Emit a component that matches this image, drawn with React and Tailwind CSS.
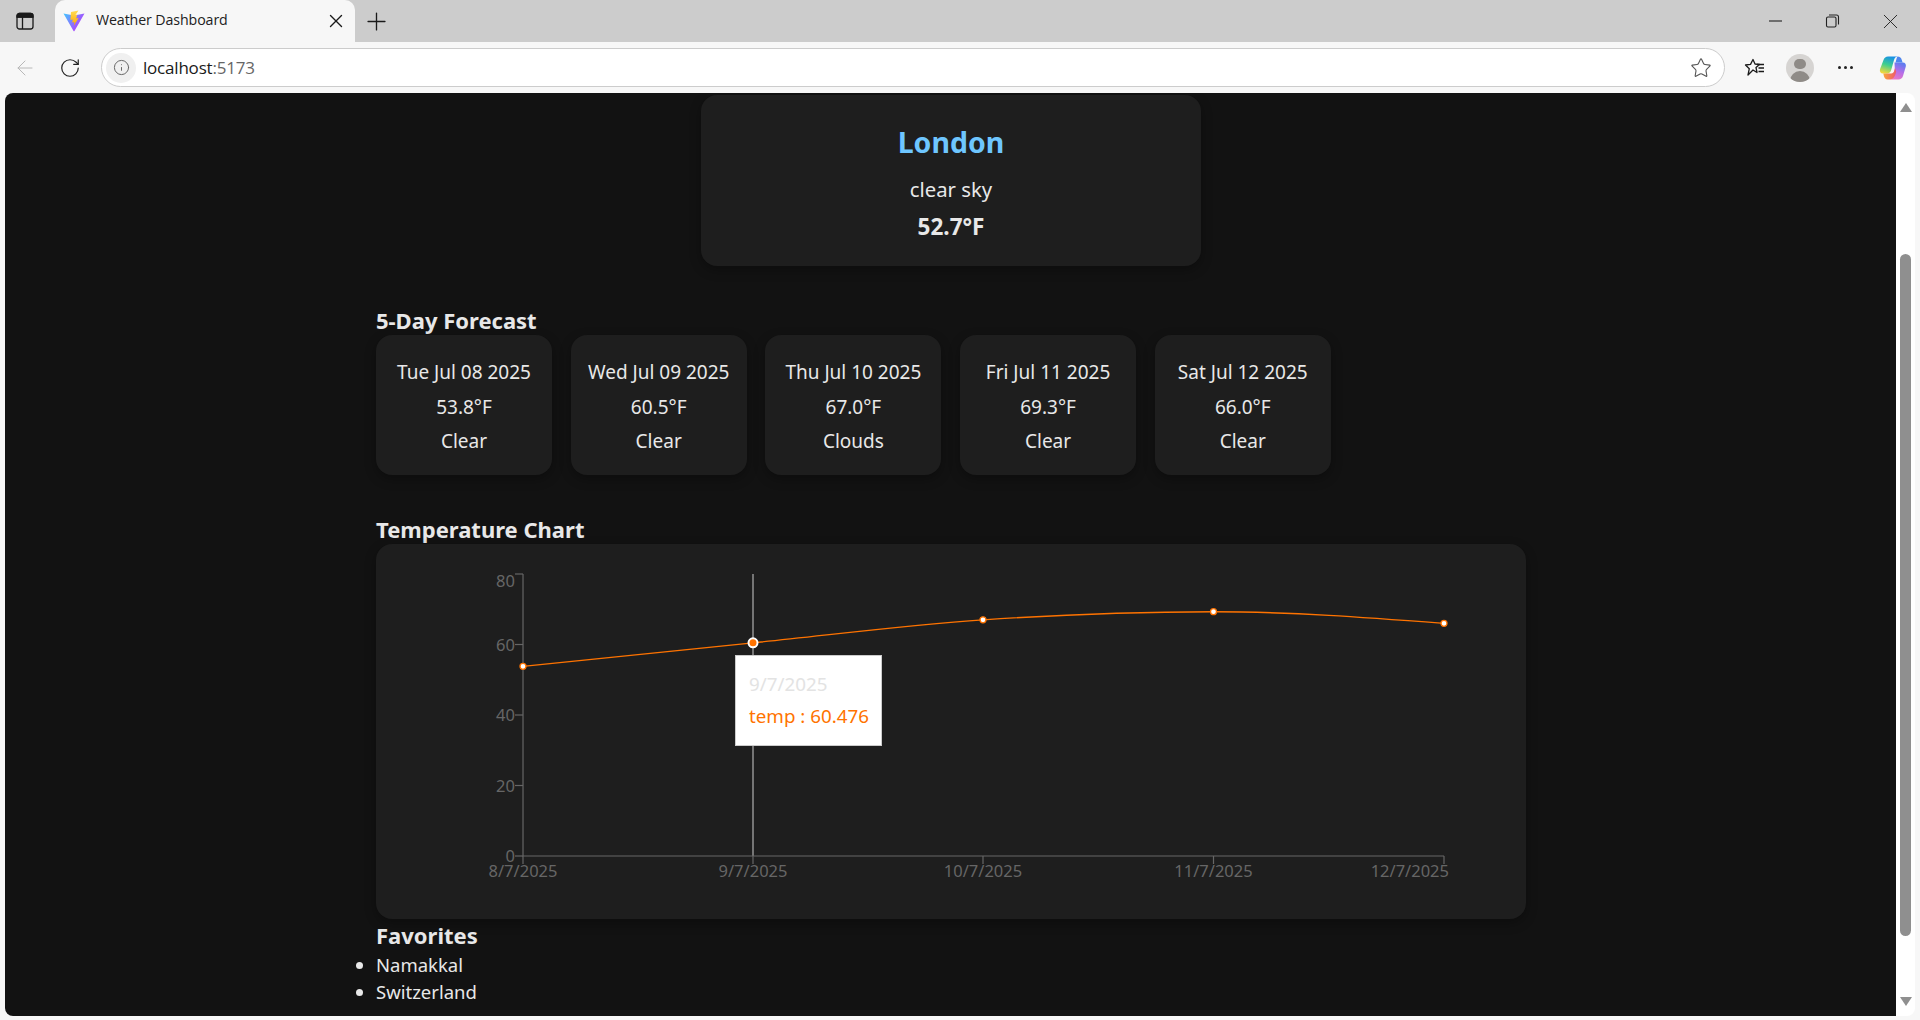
import React from "react";
import { X, Plus, ArrowLeft, RotateCw, Info, Star } from "lucide-react";

const FONT = "font-['Noto_Sans','Open_Sans',sans-serif]";
const data = [
  { l: "8/7/2025", x: 147, v: 53.8, anchor: "middle", tx: 147 },
  { l: "9/7/2025", x: 377, v: 60.476, anchor: "middle", tx: 377 },
  { l: "10/7/2025", x: 607, v: 67.0, anchor: "middle", tx: 607 },
  { l: "11/7/2025", x: 837.500, v: 69.3, anchor: "middle", tx: 837.500 },
  { l: "12/7/2025", x: 1068, v: 66.0, anchor: "end", tx: 1073 },
];
const Y = (v) => 312 - (v / 80) * 282;
function monotonePath(pts) {
  const n = pts.length;
  const d = [], m = [];
  for (let i = 0; i < n - 1; i++) d.push((pts[i + 1][1] - pts[i][1]) / (pts[i + 1][0] - pts[i][0]));
  for (let i = 1; i < n - 1; i++) {
    const h0 = pts[i][0] - pts[i - 1][0], h1 = pts[i + 1][0] - pts[i][0];
    const s0 = d[i - 1], s1 = d[i], p = (s0 * h1 + s1 * h0) / (h0 + h1);
    m[i] = (Math.sign(s0) + Math.sign(s1)) * Math.min(Math.abs(s0), Math.abs(s1), 0.5 * Math.abs(p)) || 0;
  }
  m[0] = (3 * d[0] - m[1]) / 2;
  m[n - 1] = (3 * d[n - 2] - m[n - 2]) / 2;
  let s = `M${pts[0][0]},${pts[0][1]}`;
  for (let i = 0; i < n - 1; i++) {
    const h = (pts[i + 1][0] - pts[i][0]) / 3;
    s += `C${pts[i][0] + h},${pts[i][1] + m[i] * h} ${pts[i + 1][0] - h},${pts[i + 1][1] - m[i + 1] * h} ${pts[i + 1][0]},${pts[i + 1][1]}`;
  }
  return s;
}

function Heading({ children, className = "" }) {
  return <h3 className={`text-[22px] leading-[25px] pb-[2px] font-bold text-[#e8e8e8] ${className}`}>{children}</h3>;
}

function ForecastCard({ date, temp, cond }) {
  return (
    <div className="w-[176px] h-[140px] pt-[20px] rounded-2xl bg-[#1e1e1e] shadow-[0_4px_12px_rgba(0,0,0,0.3)] text-center text-[19px] leading-[34.500px] text-[#e8e8e8] whitespace-nowrap">
      <div>{date}</div>
      <div>{temp}</div>
      <div>{cond}</div>
    </div>
  );
}

function Chart() {
  const pts = data.map((d) => [d.x, Y(d.v)]);
  return (
    <div className="relative h-[375px] rounded-2xl bg-[#1e1e1e] shadow-[0_4px_12px_rgba(0,0,0,0.3)]">
      <svg viewBox="0 0 1150 375" className="block w-full h-full">
        <line x1="377" y1="30" x2="377" y2="312" stroke="#ccc" strokeWidth="1" />
        <g stroke="#666" strokeWidth="1.2" fill="none">
          <path d="M147 30V312H1068" />
          {[30, 100.500, 171, 241.500, 312].map((y) => <line key={y} x1="139" x2="147" y1={y} y2={y} />)}
          {data.map((d) => <line key={d.l} x1={d.x} x2={d.x} y1="312" y2="320" />)}
        </g>
        <g fill="#666" fontSize="16.500" className={FONT}>
          {[[80, 43], [60, 106.500], [40, 177], [20, 247.500], [0, 318]].map(([t, y]) => (
            <text key={t} x="139" y={y} textAnchor="end">{t}</text>
          ))}
          {data.map((d) => <text key={d.l} x={d.tx} y="333" textAnchor={d.anchor}>{d.l}</text>)}
        </g>
        <path d={monotonePath(pts)} fill="none" stroke="#ff7300" strokeWidth="1.4" />
        {pts.map((p, i) => i === 1
          ? <circle key={i} cx={p[0]} cy={p[1]} r="4.500" fill="#ff7300" stroke="#fff" strokeWidth="2" />
          : <circle key={i} cx={p[0]} cy={p[1]} r="3" fill="#fff" stroke="#ff7300" strokeWidth="1.300" />)}
      </svg>
      <div className="absolute left-[359px] top-[111px] w-[147px] h-[91px] bg-white border border-[#ccc] px-[13px] pt-[12px] text-[18.800px] leading-[32px] whitespace-nowrap">
        <div className="text-[#e3e3e3]">9/7/2025</div>
        <div className="text-[#ff7300]">temp : 60.476</div>
      </div>
    </div>
  );
}

function ViteIcon() {
  return (
    <svg width="22" height="22" viewBox="0 0 22 22">
      <defs>
        <linearGradient id="vg" x1="0" y1="0" x2="1" y2="0.600"><stop offset="0" stopColor="#41c8ff" /><stop offset="1" stopColor="#bd34fe" /></linearGradient>
        <linearGradient id="vy" x1="0" y1="0" x2="0" y2="1"><stop offset="0" stopColor="#ffdd55" /><stop offset="1" stopColor="#ffa800" /></linearGradient>
      </defs>
      <path d="M0.500 3.500L11 5.500 21.500 3.500 11.600 20.800a.7.7 0 0 1-1.200 0z" fill="url(#vg)" />
      <path d="M15.500 0.500L8 2 7.400 10l2.400-.6-.6 3 2.200-.5-.6 3.800 4.800-7.800-2.400.5 1-3.800-1.800.4z" fill="url(#vy)" />
    </svg>
  );
}

function CopilotIcon() {
  return (
    <svg width="28" height="28" viewBox="0 0 28 28">
      <defs>
        <linearGradient id="c1" x1="0.600" y1="0" x2="0.300" y2="1"><stop offset="0" stopColor="#1790e8" /><stop offset="0.500" stopColor="#3fcf8e" /><stop offset="1" stopColor="#f4d83c" /></linearGradient>
        <linearGradient id="c2" x1="0.700" y1="0" x2="0.300" y2="1"><stop offset="0" stopColor="#5b7cf0" /><stop offset="0.500" stopColor="#b56ee8" /><stop offset="1" stopColor="#ef78c0" /></linearGradient>
        <linearGradient id="c3" x1="0" y1="0" x2="1" y2="0"><stop offset="0" stopColor="#f9a53a" /><stop offset="1" stopColor="#ee5a6c" /></linearGradient>
      </defs>
      <path d="M9 2.500h9.500c-2 .3-3 1.500-3.500 3.500l-2.800 10c-.6 2.300-2 3.500-4 3.500H4c-2.400 0-3.600-2-3-4.300L4.500 6C5.200 3.800 6.800 2.500 9 2.500z" fill="url(#c1)" />
      <path d="M15.500 8.500h8.300c2.400 0 3.500 1.800 3 4L24 22c-.6 2.200-2.400 3.500-4.500 3.500H10c2 0 3.200-1.300 3.800-3.300l2-7z" fill="url(#c2)" />
      <path d="M16.600 8.500c.4-2 .9-4.300 1.900-6 2.500 0 3.800 1.400 4.300 3.500l.8 2.500z" fill="#4f86ee" />
      <path d="M8 19.500h4.200c1.500 0 2.500-1 3-2.500l.8-3 1.200 3.500c-.7 3.500-2.200 8-7 8H8.500C6.500 25.500 5.500 24 5 22.500l-.7-3z" fill="url(#c3)" />
    </svg>
  );
}

function BrowserChrome() {
  return (
    <>
      <div className="flex h-[42px] bg-[#cccccc] items-stretch text-[#1a1a1a]">
        <div className="w-[50px] flex items-center justify-center">
          <svg width="18" height="18" viewBox="0 0 18 18" fill="none" stroke="#1a1a1a" strokeWidth="1.3">
            <rect x="1" y="1.500" width="16" height="15.500" rx="2.500" />
            <path d="M6.500 5V17M1 5h16" />
            <path d="M1 4a2.500 2.500 0 0 1 2.500-2.500h11A2.500 2.500 0 0 1 17 4v1H1z" fill="#1a1a1a" />
          </svg>
        </div>
        <div className="w-[5px]" />
        <div className="w-[300px] rounded-t-[10px] bg-[#f7f7f7] flex items-center pl-[8px] pr-[8px]">
          <ViteIcon />
          <span className="ml-[11px] flex-1 text-[14.200px] leading-[20px] mb-[2px] tracking-[-0.1px] font-['Open_Sans',sans-serif] text-[#222]">Weather Dashboard</span>
          <X size={22} strokeWidth={1.500} />
        </div>
        <div className="w-[43px] flex items-center justify-center"><Plus size={29} strokeWidth={1.100} /></div>
        <div className="flex-1" />
        <div className="flex items-center pr-[17px] gap-[36px]">
          <svg width="20" height="20" viewBox="0 0 20 20" stroke="#222" strokeWidth="1.100"><path d="M3 10h13" /></svg>
          <svg width="20" height="20" viewBox="0 0 20 20" fill="none" stroke="#222" strokeWidth="1.100">
            <rect x="4.500" y="6" width="9.500" height="10" rx="1.500" /><path d="M7 4h7.500A2 2 0 0 1 16.500 6v7.500" />
          </svg>
          <X size={25} strokeWidth={0.900} color="#222" />
        </div>
      </div>
      <div className="flex h-[51px] bg-[#f7f7f7] items-center">
        <div className="w-[50px] flex justify-center"><ArrowLeft size={24} strokeWidth={1} color="#b8b8b8" /></div>
        <div className="w-[40px] flex justify-center"><RotateCw size={22} strokeWidth={1.300} color="#222" /></div>
        <div className="ml-[11px] w-[1624px] h-[39px] rounded-full border border-[#ccc] bg-white flex items-center pl-[4px] pr-[12px]">
          <div className="w-[30px] h-[30px] rounded-full bg-[#f0f0f0] flex items-center justify-center">
            <Info size={17} strokeWidth={1.400} color="#666" />
          </div>
          <span className="ml-[7px] flex-1 text-[17px] tracking-[-0.2px] font-['Open_Sans',sans-serif] text-[#1a1a1a]">localhost<span className="text-[#666]">:5173</span></span>
          <Star size={22} strokeWidth={1.200} color="#555" />
        </div>
        <div className="ml-[19px] w-[22px] flex justify-center">
          <svg width="22" height="22" viewBox="0 0 22 22" fill="none" stroke="#1a1a1a" strokeWidth="1.300">
            <path d="M9 2.500l2 4.500 4.500.5-3.500 3 1 5L9 13l-5 5 1.300-6.300L1.500 8l5-.6z" strokeLinejoin="round" />
            <path d="M13 7.500h7M14.500 11h5.500M14.500 14.500h5.500" />
          </svg>
        </div>
        <div className="ml-[20px] w-[28px] h-[28px] rounded-full bg-[#d6d4d2] overflow-hidden flex flex-col items-center">
          <div className="mt-[5px] w-[12px] h-[12px] rounded-full bg-[#8f8b87]" />
          <div className="mt-[2px] w-[20px] h-[12px] rounded-t-full bg-[#8f8b87]" />
        </div>
        <div className="ml-[20px] w-[22px] flex justify-center gap-[3px]">
          <span className="w-[3px] h-[3px] rounded-full bg-[#222]" />
          <span className="w-[3px] h-[3px] rounded-full bg-[#222]" />
          <span className="w-[3px] h-[3px] rounded-full bg-[#222]" />
        </div>
        <div className="ml-[23px]"><CopilotIcon /></div>
      </div>
    </>
  );
}

function Scrollbar() {
  return (
    <div className="w-[19px] bg-white rounded-tr-lg rounded-br-lg flex flex-col items-center py-[10px]">
      <div className="w-0 h-0 border-x-[6px] border-x-transparent border-b-[9px] border-b-[#8f8f8f]" />
      <div className="mt-[142px] w-[11px] h-[682px] rounded-full bg-[#8f8f8f]" />
      <div className="mt-auto w-0 h-0 border-x-[6px] border-x-transparent border-t-[9px] border-t-[#8f8f8f]" />
    </div>
  );
}

export default function App() {
  return (
    <div className={`h-[1020px] w-[1920px] overflow-hidden bg-[#f7f7f7] flex flex-col ${FONT}`}>
      <BrowserChrome />
      <div className="flex h-[923px] pl-[5px] pr-[5px]">
        <main className="flex-1 rounded-tl-lg rounded-bl-lg bg-[#121212] pl-[371px] pr-[370px] pt-[2px] overflow-hidden">
          <section className="w-[500px] h-[171px] mx-auto rounded-2xl bg-[#1e1e1e] shadow-[0_4px_12px_rgba(0,0,0,0.3)] text-center pt-[27px]">
            <h2 className="text-[28.500px] leading-[40px] font-bold text-[#6ec6ff]">London</h2>
            <p className="mt-[12px] text-[20.300px] leading-[30px] text-[#e8e8e8]">clear sky</p>
            <p className="mt-[8px] text-[22.500px] leading-[30px] font-bold text-[#e8e8e8]">52.7°F</p>
          </section>
          <Heading className="mt-[42px]">5-Day Forecast</Heading>
          <div className="flex gap-[18.700px]">
            <ForecastCard date="Tue Jul 08 2025" temp="53.8°F" cond="Clear" />
            <ForecastCard date="Wed Jul 09 2025" temp="60.5°F" cond="Clear" />
            <ForecastCard date="Thu Jul 10 2025" temp="67.0°F" cond="Clouds" />
            <ForecastCard date="Fri Jul 11 2025" temp="69.3°F" cond="Clear" />
            <ForecastCard date="Sat Jul 12 2025" temp="66.0°F" cond="Clear" />
          </div>
          <Heading className="mt-[42px]">Temperature Chart</Heading>
          <Chart />
          <Heading className="mt-[4px]">Favorites</Heading>
          <ul className="list-disc pl-0 pt-[1px] text-[18.500px] leading-[27px] text-[#e8e8e8]">
            <li>Namakkal</li>
            <li>Switzerland</li>
          </ul>
        </main>
        <Scrollbar />
      </div>
    </div>
  );
}
